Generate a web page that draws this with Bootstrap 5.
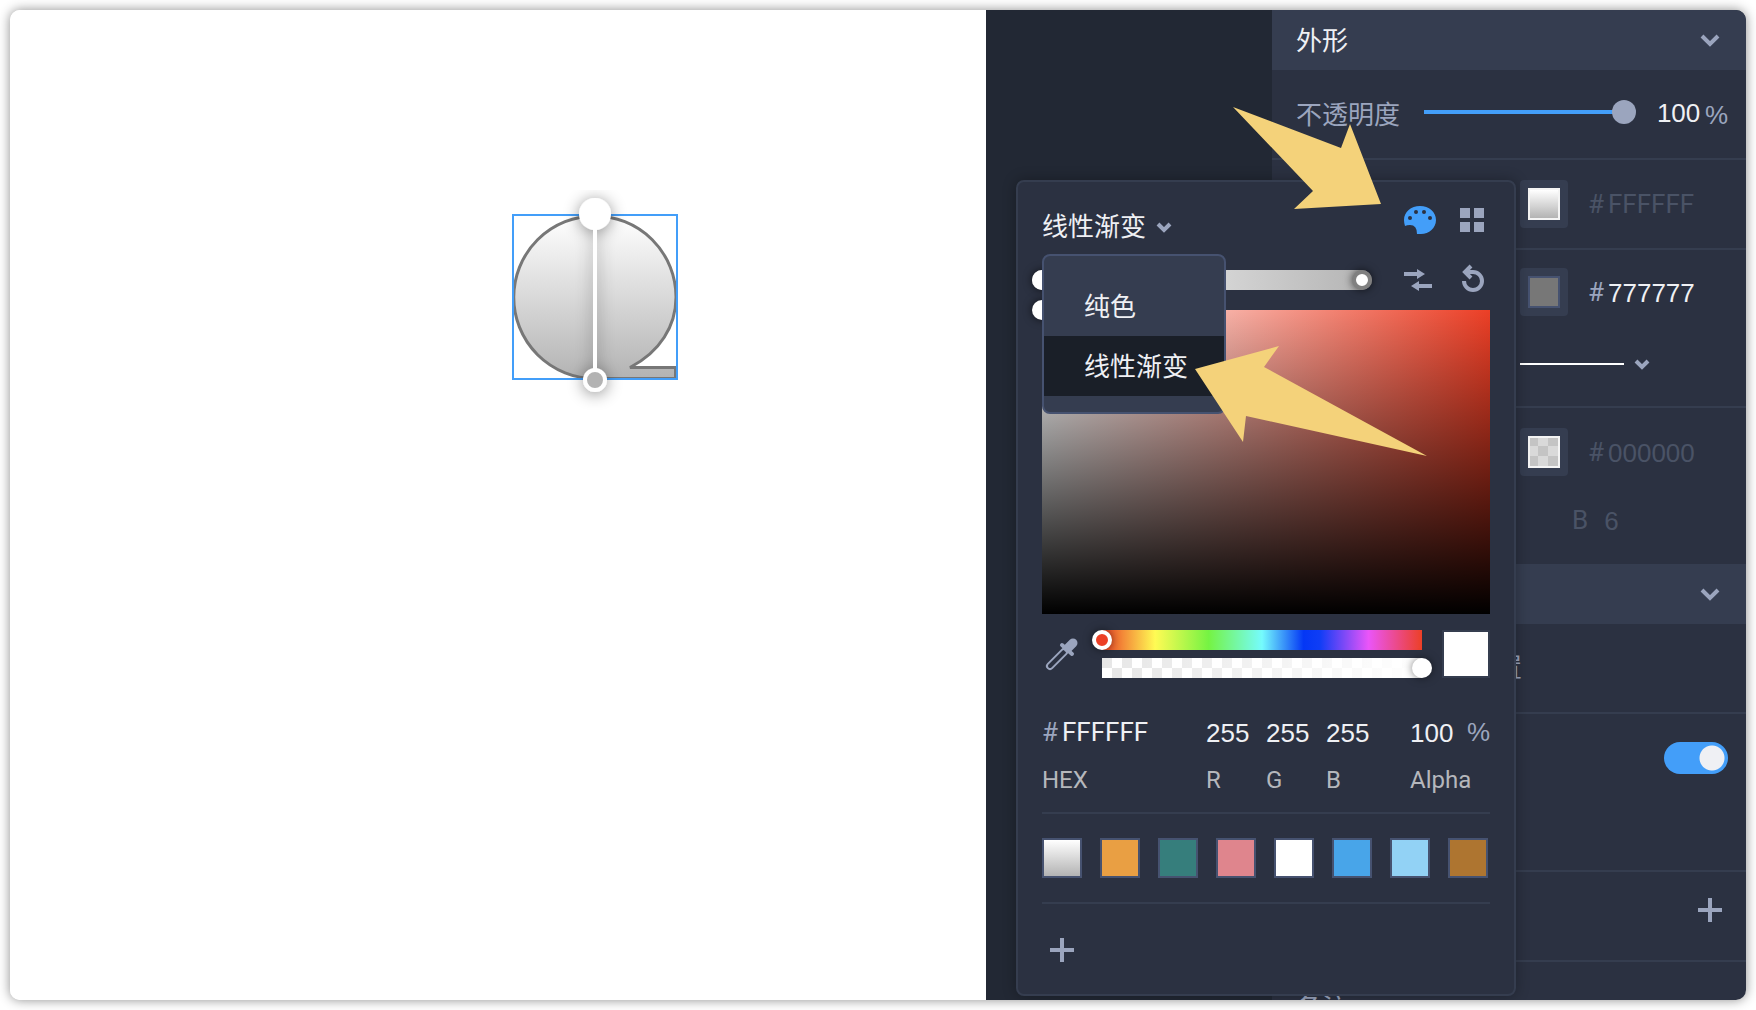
<!DOCTYPE html>
<html lang="zh-CN">
<head>
<meta charset="utf-8">
<meta name="viewport" content="width=device-width, initial-scale=1">
<title>外形</title>
<link href="https://cdn.jsdelivr.net/npm/bootstrap@5.3.0/dist/css/bootstrap.min.css" rel="stylesheet">
<style>
:root{--panel:#2b3141;--raised:#353d50;--line:#353d4f;--edge:#465270;--muted:#9ba5be;--text:#eff0f4;--off:#4a5366;--blue:#439ef9}
body{font-family:Roboto,"Noto Sans CJK SC",sans-serif;font-size:26px;line-height:32px;color:var(--text);background:#fff;padding:10px}
button{font:inherit;color:inherit;background:none;border:0;padding:0}
svg{display:block;flex:none}
.app-window{border-radius:10px;box-shadow:0 0 12px rgba(0,0,0,.45)}
.art-board{background:#fff}
.art-shape{left:486px;top:180px}
.stage-gap{width:286px;background:#222834}
.side-panel{width:474px;background:var(--panel);color:var(--muted)}
.panel-head{height:60px;background:var(--raised);color:var(--text);padding:2px 24px 0}
.panel-row{border-bottom:2px solid var(--line);padding:0 18px 0 24px;min-height:90px}
.opacity-row{padding-bottom:4px}
.cjk{padding-top:6px}
.tall-row{min-height:158px}
.shadow-row{min-height:156px;border:0}
.value-row{padding-left:248px}
.value-line{height:48px}
.blur-line{margin-top:20px}
.muted{color:var(--muted)}
.off,.off input{color:var(--off)!important}
.field{appearance:none;background:none;border:0;padding:0;margin:0;height:32px;color:var(--text);font:inherit;min-width:0;outline:0}
.digits{font-family:"Liberation Sans",Arial,sans-serif}
input.digits{padding-top:2px}
.hash{width:20px}
.chip{width:48px;height:48px;border-radius:4px;background:var(--raised);padding:8px;margin-right:20px}
.chip span{display:block;width:32px;height:32px}
.chip-gradient{background:linear-gradient(#fff,#b3b3b3);border:2px solid #f4f4f4}
.chip-gray{background:#777;border:2px solid var(--edge)}
.chip-clear{border:2px solid #f4f4f4;background:repeating-conic-gradient(#d9d9d9 0 25%,#c4c4c4 0 50%) -12px -12px/20px 20px}
.stroke-line{width:104px;height:2px;background:#fff;margin-right:10px}
.slide{appearance:none;background:none;margin:0;display:block}
.slide:focus{outline:0}
.opacity-track{width:200px;height:4px;background:var(--blue);margin-left:24px}
.opacity-track .slide{width:calc(100% + 24px);margin:0 -12px}
.opacity-track .slide::-webkit-slider-thumb{appearance:none;width:24px;height:24px;border-radius:50%;background:var(--muted)}
.opacity-value{width:48px}
.switch{appearance:none;width:64px;height:32px;border-radius:16px;background:radial-gradient(circle at 48px 50%,#eff0f4 12px,transparent 13px),var(--blue);margin:28px 0 0}
.picker{right:230px;top:170px;width:500px;background:var(--panel);border:2px solid var(--line);border-radius:8px;padding:24px;box-shadow:0 0 14px rgba(0,0,0,.3)}
.picker-title{height:40px;gap:10px;padding-top:2px}
.ramp-row{height:20px;margin-top:24px}
.ramp{width:340px;height:20px;margin-left:-10px;border-radius:10px;background:linear-gradient(90deg,#fff,#b3b3b3)}
.knob{width:20px;height:20px;border-radius:50%;background:#fff;box-shadow:0 0 8px rgba(0,0,0,.65)}
.knob-end{border:4px solid #808080}
.shade{height:304px;margin-top:20px;background:linear-gradient(transparent,#000),linear-gradient(90deg,#fff,#ec3f26)}
.shade .knob{left:-10px;top:-10px}
.mix-row{margin-top:16px}
.mix-bars{margin:0 20px}
.bar{height:20px}
.bar .slide{width:calc(100% + 20px);height:20px;margin:0 -10px}
.bar .slide::-webkit-slider-thumb{appearance:none;width:20px;height:20px;border-radius:50%;background:#fff;box-shadow:0 0 8px rgba(0,0,0,.5)}
.hue{background:linear-gradient(90deg,#ec4026,#fffb54 16.6%,#75f343 33.3%,#75fbfd 50%,#0437f5 63%,#0f3df6 68%,#ea55f8 83.3%,#ec4026)}
.hue .slide::-webkit-slider-thumb{background:#ec4026;border:4px solid #fff}
.alpha{background:linear-gradient(90deg,transparent,#fff),repeating-conic-gradient(#fff 0 25%,#e6e6e6 0 50%) 0 0/20px 20px}
.preview{width:48px;height:48px;background:#fff;border:2px solid var(--line)}
.number-row{margin-top:38px}
.rgb{width:60px}
.alpha-value{width:80px;margin-left:24px}
.caption{display:block;font-size:24px;line-height:24px;margin-top:20px;color:#b5b7bc}
.rule{height:2px;background:var(--line)}
.number-row + .rule{margin-top:20px}
.swatches{gap:18px;margin:24px 0}
.swatch{width:40px;height:40px;border:2px solid var(--edge)!important}
.add-swatch{margin-top:26px}
.type-menu{left:24px;top:72px;width:184px;background:var(--raised);border:2px solid var(--edge);border-radius:8px;padding:20px 0 16px;overflow:hidden}
.type-menu button{height:60px;padding:2px 0 0 40px;text-align:left;width:100%}
.type-menu .chosen{background:#1a1f28}
.cut-label{width:226px}
.pointers{right:309px;top:90px;pointer-events:none}
</style>
<script src="https://cdn.jsdelivr.net/npm/bootstrap@5.3.0/dist/js/bootstrap.bundle.min.js"></script>
</head>
<body class="vh-100 overflow-hidden">
<main class="app-window d-flex h-100 position-relative overflow-hidden">
  <section class="art-board flex-grow-1 position-relative">
    <svg class="art-shape position-absolute" width="198" height="220" viewBox="0 0 198 220">
      <defs>
        <linearGradient id="fade" x1="0" y1="0" x2="0" y2="1"><stop stop-color="#fff"/><stop offset="1" stop-color="#b3b3b3"/></linearGradient>
        <filter id="soft" x="-150%" y="-50%" width="400%" height="200%"><feDropShadow dx="0" dy="2" stdDeviation="8" flood-opacity=".45"/></filter>
      </defs>
      <path d="M99 26A81 81 0 1 0 99 188.500H179.500V177.500H134C164 162 180 136 180 107A81 81 0 0 0 99 26Z" fill="url(#fade)" stroke="#777" stroke-width="3"/>
      <rect x="17" y="25" width="164" height="164" fill="none" stroke="#439ef9" stroke-width="2"/>
      <g filter="url(#soft)"><path d="M99 24V190" stroke="#fff" stroke-width="4"/><circle cx="99" cy="24" r="16" fill="#fff"/><circle cx="99" cy="190" r="10" fill="#b3b3b3" stroke="#fff" stroke-width="4"/></g>
    </svg>
  </section>
  <div class="stage-gap flex-shrink-0"></div>
  <aside class="side-panel flex-shrink-0 overflow-hidden">
    <header class="panel-head d-flex align-items-center justify-content-between">
      <span>外形</span>
      <button aria-label="折叠"><svg width="24" height="24" viewBox="0 0 24 24" fill="none" stroke="#9ba5be" stroke-width="4"><path d="M4 7l8 8 8-8"/></svg></button>
    </header>
    <div class="panel-row opacity-row d-flex align-items-center">
      <label class="cjk" for="opacity">不透明度</label>
      <div class="opacity-track d-flex align-items-center flex-shrink-0"><input class="slide" id="opacity" type="range" value="100"></div>
      <input class="field digits opacity-value ms-auto" value="100" aria-label="不透明度数值"><span class="digits cjk">%</span>
    </div>
    <div class="panel-row value-row d-flex align-items-center">
      <button class="chip" aria-label="填充"><span class="chip-gradient"></span></button>
      <label class="hash off" for="fill">#</label><input class="field w-50 off" id="fill" value="FFFFFF">
    </div>
    <div class="panel-row tall-row value-row d-flex flex-column justify-content-center">
      <div class="value-line d-flex align-items-center">
        <button class="chip" aria-label="描边"><span class="chip-gray"></span></button>
        <label class="hash" for="stroke">#</label><input class="field digits w-50" id="stroke" value="777777">
      </div>
      <button class="value-line d-flex align-items-center mt-4" aria-label="线型"><span class="stroke-line"></span><svg width="16" height="16" viewBox="0 0 16 16" fill="none" stroke="#9ba5be" stroke-width="4"><path d="M2 5l6 6 6-6"/></svg></button>
    </div>
    <div class="panel-row shadow-row value-row d-flex flex-column justify-content-center">
      <div class="value-line d-flex align-items-center">
        <button class="chip" aria-label="阴影"><span class="chip-clear"></span></button>
        <label class="hash off" for="shadow">#</label><input class="field digits w-50 off" id="shadow" value="000000">
      </div>
      <div class="value-line blur-line d-flex align-items-center ps-5 off"><label class="ms-1 me-3" for="blur">B</label><input class="field digits w-25 off" id="blur" value="6"></div>
    </div>
    <header class="panel-head d-flex align-items-center justify-content-end">
      <button aria-label="折叠"><svg width="24" height="24" viewBox="0 0 24 24" fill="none" stroke="#9ba5be" stroke-width="4"><path d="M4 7l8 8 8-8"/></svg></button>
    </header>
    <div class="panel-row d-flex align-items-center"><span class="cut-label text-end">置</span></div>
    <div class="panel-row tall-row d-flex align-items-start justify-content-end"><input class="switch" type="checkbox" checked aria-label="开关"></div>
    <div class="panel-row d-flex align-items-start justify-content-end pt-4">
      <button class="me-1" aria-label="添加"><svg width="28" height="28" viewBox="0 0 28 28" stroke="#9ba5be" stroke-width="4"><path d="M14 2v24M2 14h24"/></svg></button>
    </div>
    <div class="panel-row d-flex align-items-center"><span class="pt-1">备注</span></div>
  </aside>

  <section class="picker position-absolute">
    <div class="d-flex align-items-start">
      <button class="picker-title d-flex align-items-center me-auto"><span>线性渐变</span><svg width="16" height="16" viewBox="0 0 16 16" fill="none" stroke="#9ba5be" stroke-width="4"><path d="M2 5l6 6 6-6"/></svg></button>
      <button class="me-4" aria-label="调色板"><svg width="32" height="28" viewBox="0 0 32 28"><path fill="#439ef9" d="M0 14C0 6 7 0 16 0s16 6 16 14-7 14-15 14h-4q0-9-7-9-3 0-5 1Q0 17 0 14Z"/><g fill="#2b3141"><circle cx="6" cy="12" r="2"/><circle cx="12" cy="6" r="2"/><circle cx="20" cy="6" r="2"/><circle cx="26" cy="12" r="2"/></g></svg></button>
      <button class="me-1" aria-label="色板"><svg width="26" height="28" viewBox="0 0 26 28" fill="#9ba5be"><path d="M0 2h10v10H0zM14 2h10v10H14zM0 16h10v10H0zM14 16h10v10H14z"/></svg></button>
    </div>
    <div class="ramp-row d-flex align-items-center">
      <div class="ramp d-flex justify-content-between me-auto"><button class="knob" aria-label="起点"></button><button class="knob knob-end" aria-label="终点"></button></div>
      <button class="me-4" aria-label="反向"><svg width="32" height="28" viewBox="0 0 32 28" fill="#9ba5be"><path d="M0 6h13V3l8 5-8 5v-3H0zM28 18v4H15v3l-8-5 8-5v3z"/></svg></button>
      <button class="me-1" aria-label="旋转"><svg width="26" height="28" viewBox="0 0 26 28" overflow="visible"><path d="M4 15a9 9 0 1 0 9-9H6M11 0L5 6l6 6" fill="none" stroke="#9ba5be" stroke-width="4"/></svg></button>
    </div>
    <div class="shade position-relative"><button class="knob position-absolute" aria-label="颜色"></button></div>
    <div class="mix-row d-flex align-items-center">
      <button aria-label="吸管"><svg width="40" height="40" viewBox="0 0 40 40" fill="none" stroke-linecap="round"><path d="M8 32L22 18" stroke="#9ba5be" stroke-width="8"/><path d="M8 32L22 18" stroke="#2b3141" stroke-width="4"/><path d="M20 11L30 20" stroke="#9ba5be" stroke-width="4"/><path d="M26 14L31 9" stroke="#9ba5be" stroke-width="9"/></svg></button>
      <div class="mix-bars flex-grow-1 d-grid gap-2">
        <div class="bar hue"><input class="slide" type="range" value="0" aria-label="色相"></div>
        <div class="bar alpha"><input class="slide" type="range" value="100" aria-label="透明度"></div>
      </div>
      <div class="preview"></div>
    </div>
    <div class="number-row d-flex">
      <div class="flex-fill"><div class="d-flex"><span class="hash muted">#</span><input class="field w-75" id="hex" value="FFFFFF" size="6"></div><label class="caption" for="hex">HEX</label></div>
      <div class="rgb flex-shrink-0"><input class="field digits w-100 d-block" id="red" value="255"><label class="caption" for="red">R</label></div>
      <div class="rgb flex-shrink-0"><input class="field digits w-100 d-block" id="green" value="255"><label class="caption" for="green">G</label></div>
      <div class="rgb flex-shrink-0"><input class="field digits w-100 d-block" id="blue" value="255"><label class="caption" for="blue">B</label></div>
      <div class="alpha-value flex-shrink-0"><div class="d-flex"><input class="field digits flex-grow-1 w-50" id="alpha" value="100"><span class="digits muted">%</span></div><label class="caption" for="alpha">Alpha</label></div>
    </div>
    <div class="rule"></div>
    <div class="swatches d-flex">
      <button class="swatch" style="background:linear-gradient(#fff,#b3b3b3)" aria-label="渐变"></button>
      <button class="swatch" style="background:#e99f43" aria-label="橙"></button>
      <button class="swatch" style="background:#367e7c" aria-label="青"></button>
      <button class="swatch" style="background:#df858d" aria-label="粉"></button>
      <button class="swatch" style="background:#fff" aria-label="白"></button>
      <button class="swatch" style="background:#48a5e9" aria-label="蓝"></button>
      <button class="swatch" style="background:#92d2f5" aria-label="浅蓝"></button>
      <button class="swatch" style="background:#ae7530" aria-label="棕"></button>
    </div>
    <div class="rule"></div>
    <button class="add-swatch d-block" aria-label="添加色板"><svg width="40" height="40" viewBox="0 0 40 40" stroke="#9ba5be" stroke-width="4"><path d="M20 8v24M8 20h24"/></svg></button>
    <div class="type-menu position-absolute"><button>纯色</button><button class="chosen">线性渐变</button></div>
  </section>

  <svg class="pointers position-absolute" width="240" height="370" viewBox="1197 100 240 370" overflow="visible" fill="#f4d27a"><path d="M1233 107L1341 148 1350 124 1381 204 1294 209 1313 191ZM1195 369L1279 346 1264 367 1427 456 1246 416 1243 442Z" /></svg>
</main>
</body>
</html>
